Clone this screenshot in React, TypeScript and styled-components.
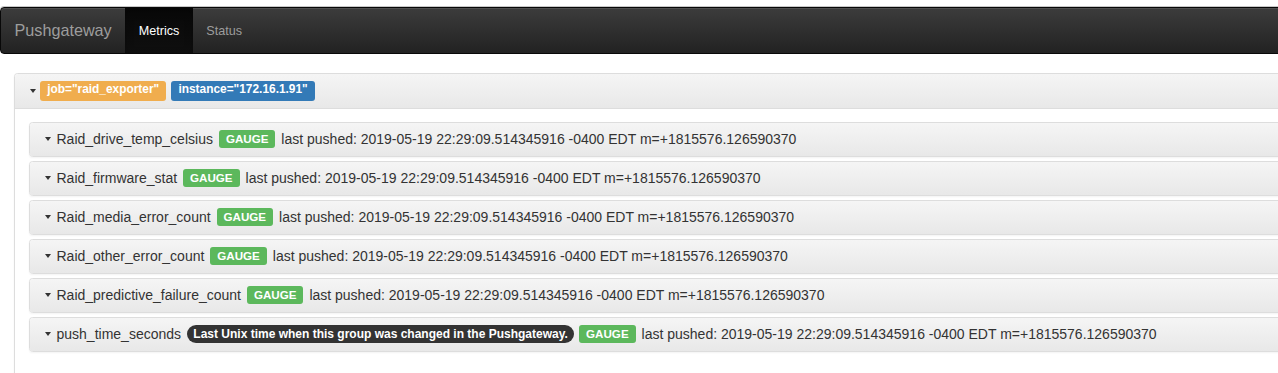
import styled, { createGlobalStyle } from 'styled-components';

const GlobalStyle = createGlobalStyle`
  html, body {
    margin: 0;
    padding: 0;
    background: #fff;
    overflow: hidden;
  }
  body {
    font-family: "Liberation Sans", Arial, sans-serif;
    font-size: 14px;
    color: #333;
  }
`;

const Page = styled.div`
  width: 1320px;
  padding-top: 7px;
`;

const Navbar = styled.nav`
  display: flex;
  align-items: stretch;
  height: 45px;
  border: 1px solid #080808;
  border-radius: 4px;
  background: linear-gradient(to bottom, #3c3c3c 0%, #222 100%);
  box-shadow: 0 -1px 0 #c8c8c8, inset 0 1px 0 rgba(255, 255, 255, 0.1);
`;

const Brand = styled.a`
  display: flex;
  align-items: center;
  padding: 0 13.5px;
  font-size: 16.2px;
  color: #9d9d9d;
  text-decoration: none;
`;

const NavItem = styled.a<{ $active?: boolean }>`
  display: flex;
  align-items: center;
  padding: 0 13.5px;
  font-size: 12.6px;
  text-decoration: none;
  color: ${(p) => (p.$active ? '#fff' : '#9d9d9d')};
  background: ${(p) =>
    p.$active ? 'linear-gradient(to bottom, #080808 0%, #0f0f0f 100%)' : 'transparent'};
  box-shadow: ${(p) => (p.$active ? 'inset 0 3px 9px rgba(0, 0, 0, 0.25)' : 'none')};
`;

const Content = styled.div`
  padding: 19px 0 0 14px;
`;

const Panel = styled.div`
  border: 1px solid #ddd;
  border-radius: 3.6px;
  background: #fff;
  box-shadow: 0 1px 2px rgba(0, 0, 0, 0.05);
`;

const Heading = styled.div<{ $bordered?: boolean }>`
  display: flex;
  align-items: center;
  gap: 5px;
  height: ${(p) => (p.$bordered ? 16 : 15)}px;
  padding: 9px 13.5px;
  background: linear-gradient(to bottom, #f5f5f5 0%, #e8e8e8 100%);
  border-bottom: ${(p) => (p.$bordered ? '1px solid #ddd' : 'none')};
  border-radius: 3px 3px 0 0;
  font-size: 14px;
  line-height: 15px;
  white-space: nowrap;
`;

const Caret = styled.span<{ $space?: number }>`
  display: inline-block;
  width: 0;
  height: 0;
  margin-left: 1.5px;
  margin-right: ${(p) => p.$space ?? 0}px;
  border-top: 4px solid #333;
  border-left: 3.5px solid transparent;
  border-right: 3.5px solid transparent;
`;

const Label = styled.span<{ $tone: 'warning' | 'primary' | 'success'; $size?: number }>`
  display: inline-block;
  padding: 0.25em 0.6em 0.35em;
  font-size: ${(p) => p.$size ?? 11.6}px;
  font-weight: bold;
  line-height: 1;
  color: #fff;
  border-radius: 0.25em;
  background: ${(p) =>
    p.$tone === 'warning' ? '#f0ad4e' : p.$tone === 'primary' ? '#337ab7' : '#5cb85c'};
`;

const Badge = styled.span`
  display: inline-block;
  padding: 2.7px 6.3px;
  font-size: 12px;
  font-weight: bold;
  line-height: 1;
  color: #fff;
  background: #333;
  border-radius: 9px;
`;

const Body = styled.div`
  display: flex;
  flex-direction: column;
  gap: 4px;
  padding: 12.5px 0 40px 13.5px;
`;

const MetricRow = styled.div`
  border: 1px solid #ddd;
  border-radius: 3.6px;
  overflow: hidden;
  box-shadow: 0 1px 2px rgba(0, 0, 0, 0.05);
`;

const Name = styled.span`
  margin-right: 1px;
`;

const Pushed = styled.span`
  margin-left: 1px;
`;

interface Metric {
  name: string;
  help?: string;
}

const metrics: Metric[] = [
  { name: 'Raid_drive_temp_celsius' },
  { name: 'Raid_firmware_stat' },
  { name: 'Raid_media_error_count' },
  { name: 'Raid_other_error_count' },
  { name: 'Raid_predictive_failure_count' },
  { name: 'push_time_seconds', help: 'Last Unix time when this group was changed in the Pushgateway.' },
];

const pushed = 'last pushed: 2019-05-19 22:29:09.514345916 -0400 EDT m=+1815576.126590370';

function App() {
  return (
    <Page>
      <GlobalStyle />
      <Navbar>
        <Brand>Pushgateway</Brand>
        <NavItem $active>Metrics</NavItem>
        <NavItem>Status</NavItem>
      </Navbar>
      <Content>
        <Panel>
          <Heading $bordered>
            <Caret $space={-1} />
            <Label $tone="warning" $size={11.9}>job="raid_exporter"</Label>
            <Label $tone="primary" $size={11.9}>instance="172.16.1.91"</Label>
          </Heading>
          <Body>
            {metrics.map((m) => (
              <MetricRow key={m.name}>
                <Heading>
                  <Caret $space={1} />
                  <Name>{m.name}</Name>
                  {m.help ? <Badge>{m.help}</Badge> : null}
                  <Label $tone="success">GAUGE</Label>
                  <Pushed>{pushed}</Pushed>
                </Heading>
              </MetricRow>
            ))}
          </Body>
        </Panel>
      </Content>
    </Page>
  );
}

export default App;
